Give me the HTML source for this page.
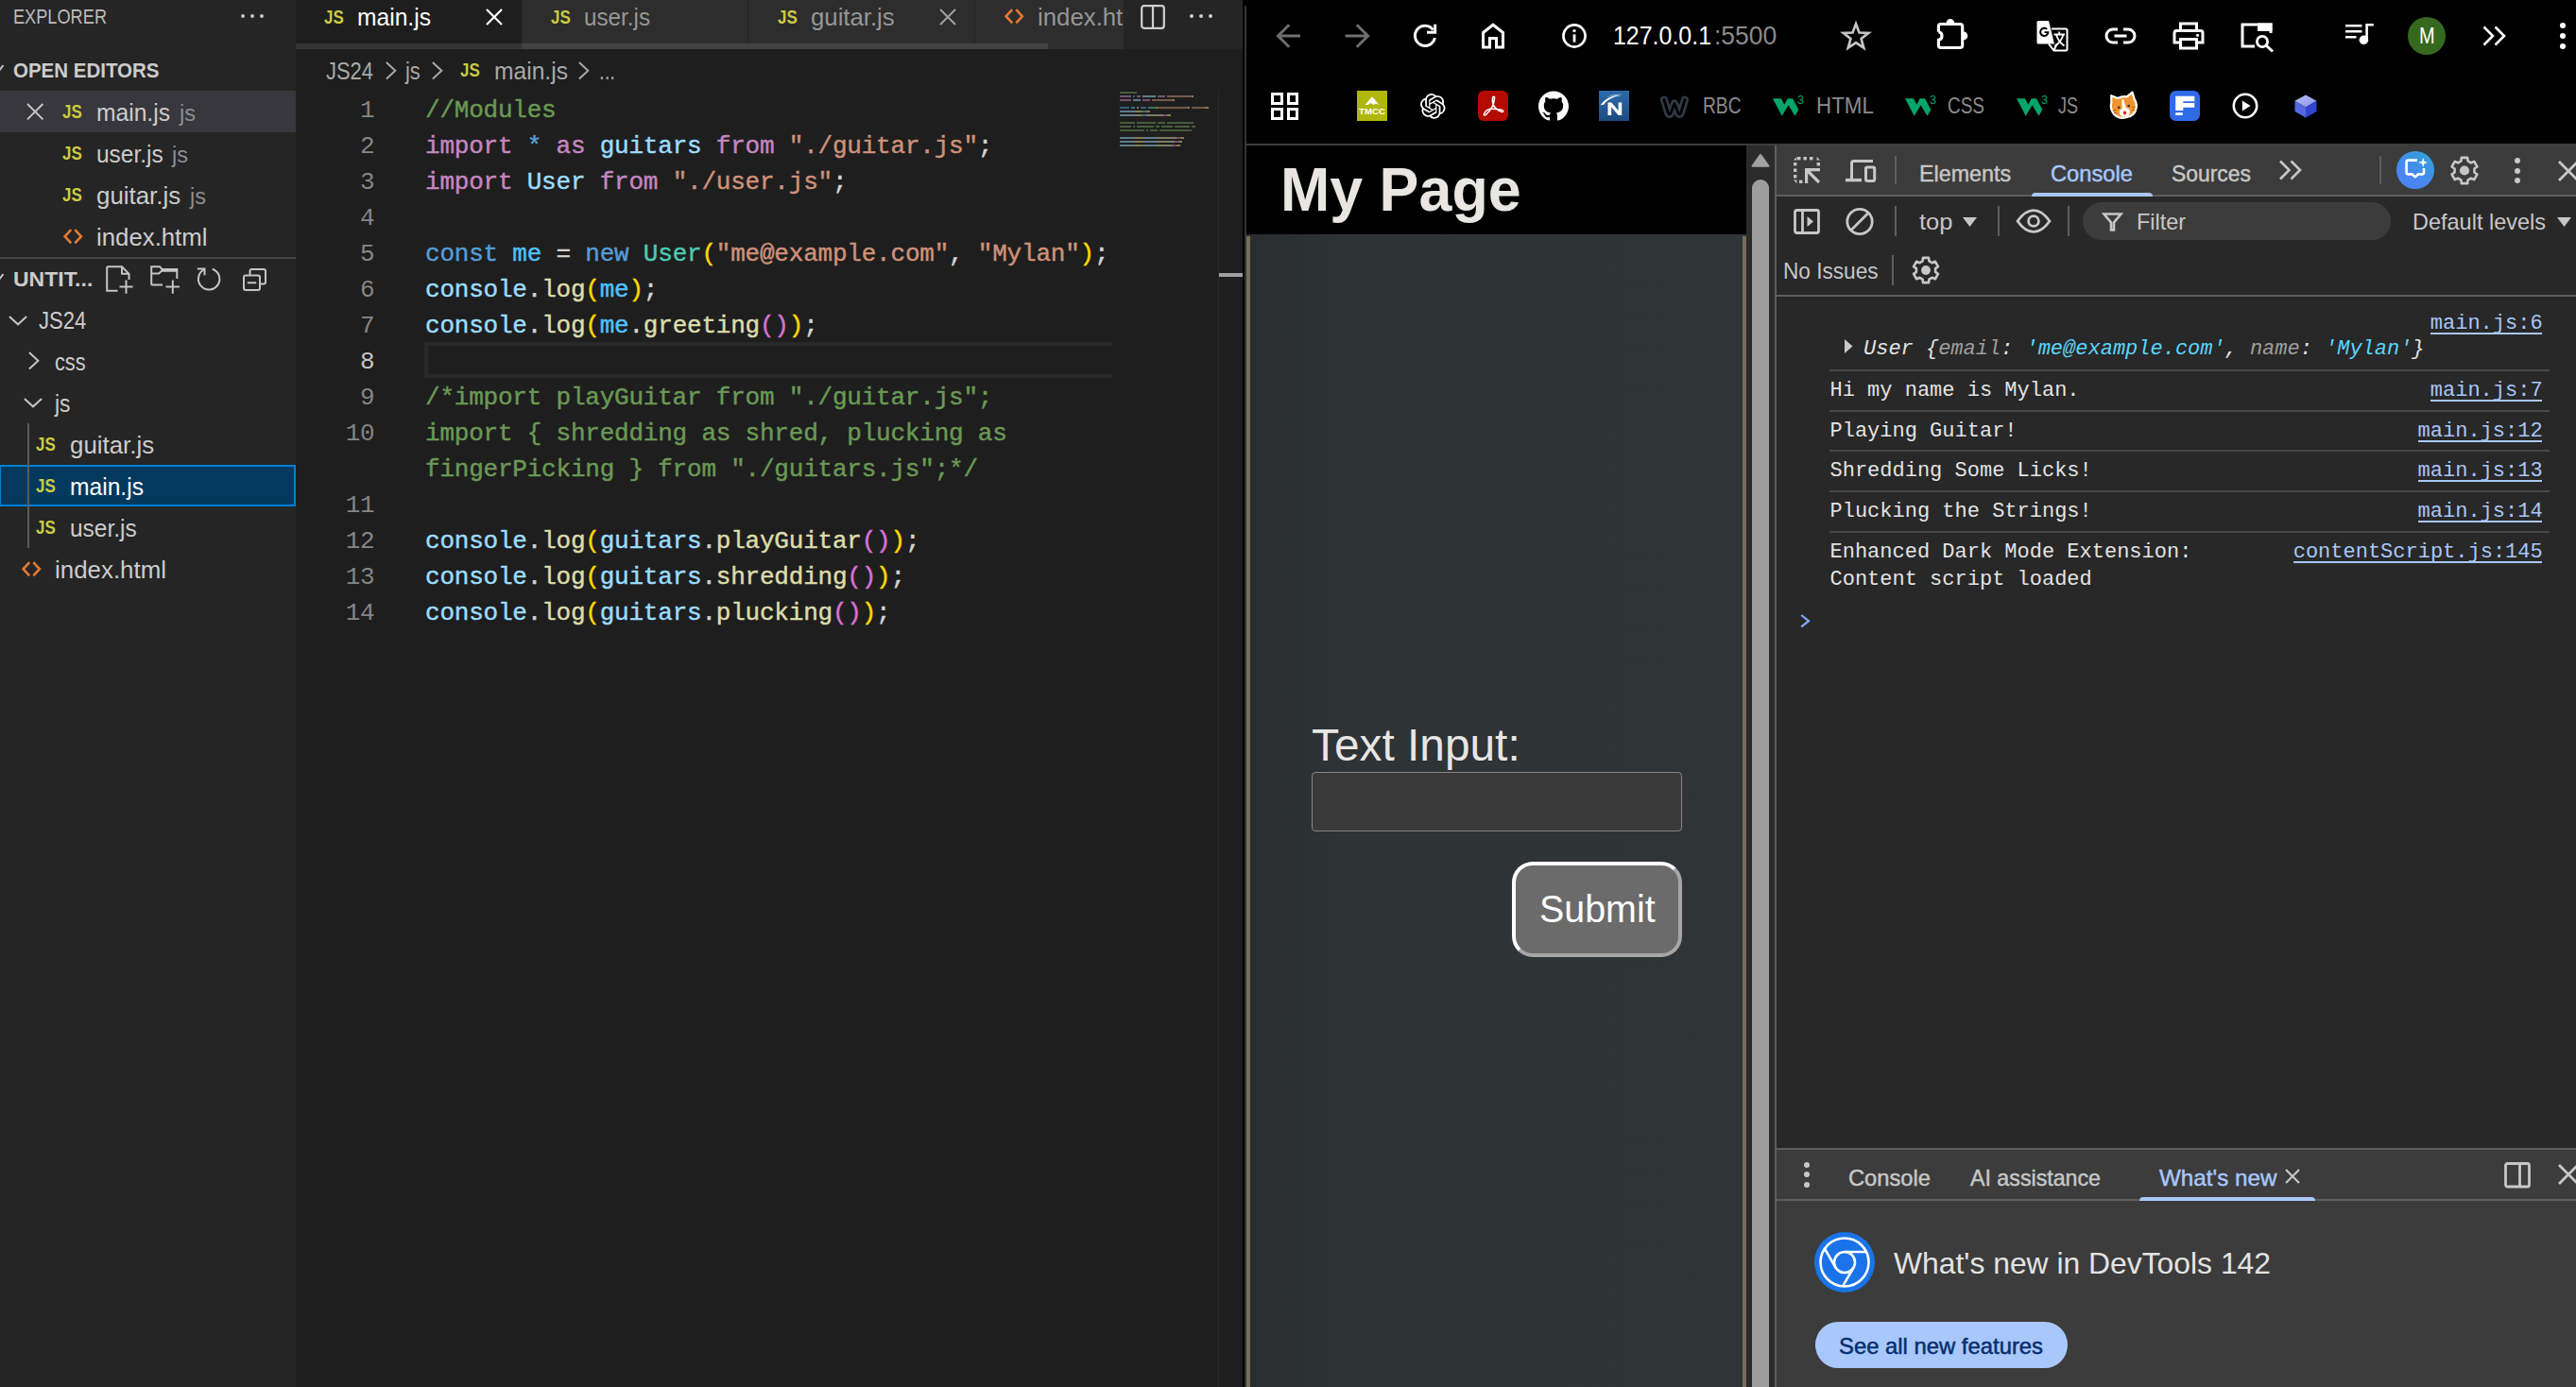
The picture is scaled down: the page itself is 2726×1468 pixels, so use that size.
<!DOCTYPE html>
<html><head><meta charset="utf-8"><title>recreation</title>
<style>
*{box-sizing:border-box;margin:0;padding:0}
html,body{width:2726px;height:1468px;overflow:hidden;background:#000;font-family:"Liberation Sans",sans-serif}
.a{position:absolute;display:block}
.t{position:absolute;display:block;white-space:pre;transform-origin:0 50%;font-family:"Liberation Sans",sans-serif}
.t.m{font-family:"Liberation Mono",monospace}
.b{font-weight:bold}.i{font-style:italic}
svg{overflow:visible}

.ln{position:absolute;left:313px;width:83.5px;text-align:right;font:26px/38px "Liberation Mono",monospace;letter-spacing:-0.213px;height:38px}
.cl{position:absolute;left:450px;white-space:pre;font:26px/38px "Liberation Mono",monospace;letter-spacing:-0.213px;height:38px;-webkit-text-stroke:0.45px}
.mm i{position:absolute;height:2.6px;opacity:.5}
</style></head>
<body>
<div class="a" style="left:0px;top:0px;width:313px;height:1468px;background:#252526;"></div>
<span class="t" style="left:13.80px;top:-3.6px;height:44.0px;line-height:44.0px;font-size:22px;color:#bbbbbb;transform:scaleX(0.8263);">EXPLORER</span>
<div class="a" style="left:254.7px;top:14.7px;width:4.6px;height:4.6px;background:#c5c5c5;border-radius:50%"></div>
<div class="a" style="left:264.7px;top:14.7px;width:4.6px;height:4.6px;background:#c5c5c5;border-radius:50%"></div>
<div class="a" style="left:274.7px;top:14.7px;width:4.6px;height:4.6px;background:#c5c5c5;border-radius:50%"></div>
<svg class="a" style="left:0px;top:68px;" width="4" height="8" viewBox="0 0 4 8"><path d="M-6 1 L-1 7 L3.5 1" fill="none" stroke="#c5c5c5" stroke-width="2"/></svg>
<span class="t b" style="left:13.50px;top:53.4px;height:44.0px;line-height:44.0px;font-size:22px;color:#cccccc;transform:scaleX(0.9315);">OPEN EDITORS</span>
<div class="a" style="left:0px;top:96px;width:313px;height:44px;background:#37373d;"></div>
<svg class="a" style="left:27.8px;top:108.8px;" width="18.4" height="18.4" viewBox="0 0 18.4 18.4"><path d="M1 1 L17.4 17.4 M17.4 1 L1 17.4" fill="none" stroke="#c5c5c5" stroke-width="2"/></svg>
<span class="t b" style="left:66.00px;top:98.1px;height:40.0px;line-height:40.0px;font-size:20px;color:#cbcb41;transform:scaleX(0.8463);">JS</span>
<span class="t" style="left:102.00px;top:93.7px;height:51.0px;line-height:51.0px;font-size:25.5px;color:#cccccc;transform:scaleX(0.9655);">main.js</span>
<span class="t" style="left:189.99px;top:97.0px;height:46.0px;line-height:46.0px;font-size:23px;color:#8e8e8e;transform:scaleX(1.0244);">js</span>
<span class="t b" style="left:66.00px;top:142.1px;height:40.0px;line-height:40.0px;font-size:20px;color:#cbcb41;transform:scaleX(0.8463);">JS</span>
<span class="t" style="left:102.00px;top:137.7px;height:51.0px;line-height:51.0px;font-size:25.5px;color:#cccccc;transform:scaleX(0.9594);">user.js</span>
<span class="t" style="left:182.29px;top:141.0px;height:46.0px;line-height:46.0px;font-size:23px;color:#8e8e8e;transform:scaleX(1.0244);">js</span>
<span class="t b" style="left:66.00px;top:186.1px;height:40.0px;line-height:40.0px;font-size:20px;color:#cbcb41;transform:scaleX(0.8463);">JS</span>
<span class="t" style="left:102.00px;top:181.7px;height:51.0px;line-height:51.0px;font-size:25.5px;color:#cccccc;transform:scaleX(1.0140);">guitar.js</span>
<span class="t" style="left:201.29px;top:185.0px;height:46.0px;line-height:46.0px;font-size:23px;color:#8e8e8e;transform:scaleX(1.0244);">js</span>
<svg class="a" style="left:66.5px;top:241.75px;" width="20.5" height="16.5" viewBox="0 0 20.5 16.5"><path d="M8.2 1.2 L1.6 8.25 L8.2 15.3 M12.3 1.2 L18.9 8.25 L12.3 15.3" fill="none" stroke="#e37933" stroke-width="2.6"/></svg>
<span class="t" style="left:102.00px;top:225.7px;height:51.0px;line-height:51.0px;font-size:25.5px;color:#cccccc;transform:scaleX(1.0109);">index.html</span>
<div class="a" style="left:0px;top:272px;width:313px;height:2px;background:#454546;"></div>
<svg class="a" style="left:0px;top:289px;" width="4" height="8" viewBox="0 0 4 8"><path d="M-6 1 L-1 7 L3.5 1" fill="none" stroke="#c5c5c5" stroke-width="2"/></svg>
<span class="t b" style="left:13.50px;top:274.0px;height:44.0px;line-height:44.0px;font-size:22px;color:#cccccc;transform:scaleX(1.0449);">UNTIT...</span>
<svg class="a" style="left:112px;top:281px;" width="30" height="31" viewBox="0 0 30 31"><path d="M1.2 1.2 H17 L24.5 8.8 V15 M17 1.2 V8.8 H24.5 M1.2 1.2 V26.8 H12.5" fill="none" stroke="#c5c5c5" stroke-width="2"/><path d="M14.5 22.5 H28.5 M21.5 15.5 V29.8" fill="none" stroke="#c5c5c5" stroke-width="2"/></svg>
<svg class="a" style="left:158.5px;top:281px;" width="32" height="31" viewBox="0 0 32 31"><path d="M1.2 20.5 V1.2 H10 L12.5 4 H28.3 V14 M1.2 8.5 H9 L12 5.8 H28.3 M1.2 20.5 H13" fill="none" stroke="#c5c5c5" stroke-width="2"/><path d="M16.5 22.5 H31 M23.8 15.5 V29.8" fill="none" stroke="#c5c5c5" stroke-width="2"/></svg>
<svg class="a" style="left:208px;top:282.5px;overflow:visible;" width="26" height="27" viewBox="0 0 26 27"><path d="M8.3 2.2 A11.2 11.2 0 1 0 16.8 1.7" fill="none" stroke="#c5c5c5" stroke-width="2"/><path d="M0.8 1.5 H8.5 V8.3" fill="none" stroke="#c5c5c5" stroke-width="2"/></svg>
<svg class="a" style="left:256.5px;top:283.5px;" width="26" height="25" viewBox="0 0 26 25"><rect x="1" y="7.5" width="17" height="15.5" rx="2" fill="none" stroke="#c5c5c5" stroke-width="2"/><path d="M7.5 7 V3 Q7.5 1 9.5 1 H22 Q24 1 24 3 V14.5 Q24 16.5 22 16.5 H18.5" fill="none" stroke="#c5c5c5" stroke-width="2"/><path d="M4.8 15.3 H14.2" fill="none" stroke="#c5c5c5" stroke-width="2"/></svg>
<svg class="a" style="left:9.0px;top:333.75px;" width="20.0" height="10.5" viewBox="0 0 20.0 10.5"><path d="M0.9 0.9 L10.0 9.3 L19.1 0.9" fill="none" stroke="#c5c5c5" stroke-width="2"/></svg>
<span class="t" style="left:41.40px;top:313.7px;height:51.0px;line-height:51.0px;font-size:25.5px;color:#cccccc;transform:scaleX(0.8638);">JS24</span>
<svg class="a" style="left:30.049999999999997px;top:372.25px;" width="11.5" height="19.5" viewBox="0 0 11.5 19.5"><path d="M0.9 0.9 L10.3 9.75 L0.9 18.6" fill="none" stroke="#c5c5c5" stroke-width="2"/></svg>
<span class="t" style="left:57.70px;top:357.7px;height:51.0px;line-height:51.0px;font-size:25.5px;color:#cccccc;transform:scaleX(0.8523);">css</span>
<svg class="a" style="left:25.0px;top:421.25px;" width="20.0" height="10.5" viewBox="0 0 20.0 10.5"><path d="M0.9 0.9 L10.0 9.3 L19.1 0.9" fill="none" stroke="#c5c5c5" stroke-width="2"/></svg>
<span class="t" style="left:57.57px;top:401.7px;height:51.0px;line-height:51.0px;font-size:25.5px;color:#cccccc;transform:scaleX(0.8925);">js</span>
<span class="t b" style="left:38.30px;top:450.1px;height:40.0px;line-height:40.0px;font-size:20px;color:#cbcb41;transform:scaleX(0.8463);">JS</span>
<span class="t" style="left:74.00px;top:445.7px;height:51.0px;line-height:51.0px;font-size:25.5px;color:#cccccc;transform:scaleX(1.0140);">guitar.js</span>
<div class="a" style="left:0px;top:492px;width:313px;height:44px;background:#04395e;border:2px solid #007fd4;border-left-width:1px;"></div>
<div class="a" style="left:28.8px;top:448px;width:2px;height:132px;background:#5a5a5a;"></div>
<span class="t b" style="left:38.30px;top:494.1px;height:40.0px;line-height:40.0px;font-size:20px;color:#cbcb41;transform:scaleX(0.8463);">JS</span>
<span class="t" style="left:74.00px;top:489.7px;height:51.0px;line-height:51.0px;font-size:25.5px;color:#ffffff;transform:scaleX(0.9655);">main.js</span>
<span class="t b" style="left:38.30px;top:538.1px;height:40.0px;line-height:40.0px;font-size:20px;color:#cbcb41;transform:scaleX(0.8463);">JS</span>
<span class="t" style="left:74.00px;top:533.7px;height:51.0px;line-height:51.0px;font-size:25.5px;color:#cccccc;transform:scaleX(0.9594);">user.js</span>
<svg class="a" style="left:22.7px;top:593.75px;" width="20.5" height="16.5" viewBox="0 0 20.5 16.5"><path d="M8.2 1.2 L1.6 8.25 L8.2 15.3 M12.3 1.2 L18.9 8.25 L12.3 15.3" fill="none" stroke="#e37933" stroke-width="2.6"/></svg>
<span class="t" style="left:57.70px;top:577.7px;height:51.0px;line-height:51.0px;font-size:25.5px;color:#cccccc;transform:scaleX(1.0152);">index.html</span>
<div class="a" style="left:313px;top:0px;width:1002px;height:1468px;background:#1e1e1e;"></div>
<div class="a" style="left:313px;top:0px;width:1002px;height:52px;background:#252526;"></div>
<div class="a" style="left:313px;top:0px;width:239px;height:52px;background:#1e1e1e;"></div>
<div class="a" style="left:552px;top:0px;width:239px;height:52px;background:#2d2d2d;"></div>
<div class="a" style="left:792px;top:0px;width:239px;height:52px;background:#2d2d2d;"></div>
<div class="a" style="left:1032px;top:0px;width:157px;height:52px;background:#2d2d2d;"></div>
<div class="a" style="left:313px;top:46px;width:239px;height:6px;background:#353535;"></div>
<div class="a" style="left:552px;top:46px;width:557px;height:6px;background:#424242;"></div>
<span class="t b" style="left:342.50px;top:-2.4px;height:40.0px;line-height:40.0px;font-size:20px;color:#cbcb41;transform:scaleX(0.8463);">JS</span>
<span class="t" style="left:378.00px;top:-6.8px;height:51.0px;line-height:51.0px;font-size:25.5px;color:#ffffff;transform:scaleX(0.9655);">main.js</span>
<svg class="a" style="left:514px;top:8.5px;" width="18" height="18" viewBox="0 0 18 18"><path d="M1 1 L17 17 M17 1 L1 17" fill="none" stroke="#ffffff" stroke-width="2.2"/></svg>
<span class="t b" style="left:582.50px;top:-2.4px;height:40.0px;line-height:40.0px;font-size:20px;color:#cbcb41;transform:scaleX(0.8463);">JS</span>
<span class="t" style="left:618.00px;top:-6.8px;height:51.0px;line-height:51.0px;font-size:25.5px;color:#969696;transform:scaleX(0.9499);">user.js</span>
<span class="t b" style="left:822.50px;top:-2.4px;height:40.0px;line-height:40.0px;font-size:20px;color:#cbcb41;transform:scaleX(0.8463);">JS</span>
<span class="t" style="left:858.00px;top:-6.8px;height:51.0px;line-height:51.0px;font-size:25.5px;color:#969696;transform:scaleX(1.0094);">guitar.js</span>
<svg class="a" style="left:994.2px;top:8.5px;" width="18" height="18" viewBox="0 0 18 18"><path d="M1 1 L17 17 M17 1 L1 17" fill="none" stroke="#a0a0a0" stroke-width="2"/></svg>
<svg class="a" style="left:1062.5px;top:9.25px;" width="20.5" height="16.5" viewBox="0 0 20.5 16.5"><path d="M8.2 1.2 L1.6 8.25 L8.2 15.3 M12.3 1.2 L18.9 8.25 L12.3 15.3" fill="none" stroke="#e37933" stroke-width="2.6"/></svg>
<div class="a" style="left:1098px;top:0;width:91px;height:46px;overflow:hidden"><span class="t" style="left:0.00px;top:-6.8px;height:51.0px;line-height:51.0px;font-size:25.5px;color:#969696;transform:scaleX(1.0109);">index.html</span></div>
<svg class="a" style="left:1207px;top:5px;" width="26" height="26" viewBox="0 0 26 26"><rect x="1.2" y="1.2" width="23.6" height="23.6" rx="2.5" fill="none" stroke="#d0d0d0" stroke-width="2.2"/><path d="M13 1 V25" stroke="#d0d0d0" stroke-width="2.2"/></svg>
<div class="a" style="left:1258.7px;top:14.7px;width:4.6px;height:4.6px;background:#d0d0d0;border-radius:50%"></div>
<div class="a" style="left:1268.7px;top:14.7px;width:4.6px;height:4.6px;background:#d0d0d0;border-radius:50%"></div>
<div class="a" style="left:1278.7px;top:14.7px;width:4.6px;height:4.6px;background:#d0d0d0;border-radius:50%"></div>
<span class="t" style="left:345.00px;top:49.7px;height:51.0px;line-height:51.0px;font-size:25.5px;color:#a9a9a9;transform:scaleX(0.8604);">JS24</span>
<svg class="a" style="left:407.75px;top:64.75px;" width="11.5" height="19.5" viewBox="0 0 11.5 19.5"><path d="M0.9 0.9 L10.3 9.75 L0.9 18.6" fill="none" stroke="#a9a9a9" stroke-width="2"/></svg>
<span class="t" style="left:429.05px;top:49.7px;height:51.0px;line-height:51.0px;font-size:25.5px;color:#a9a9a9;transform:scaleX(0.8557);">js</span>
<svg class="a" style="left:456.65px;top:64.75px;" width="11.5" height="19.5" viewBox="0 0 11.5 19.5"><path d="M0.9 0.9 L10.3 9.75 L0.9 18.6" fill="none" stroke="#a9a9a9" stroke-width="2"/></svg>
<span class="t b" style="left:487.00px;top:54.1px;height:40.0px;line-height:40.0px;font-size:20px;color:#cbcb41;transform:scaleX(0.8463);">JS</span>
<span class="t" style="left:522.50px;top:49.7px;height:51.0px;line-height:51.0px;font-size:25.5px;color:#a9a9a9;transform:scaleX(0.9655);">main.js</span>
<svg class="a" style="left:611.65px;top:64.75px;" width="11.5" height="19.5" viewBox="0 0 11.5 19.5"><path d="M0.9 0.9 L10.3 9.75 L0.9 18.6" fill="none" stroke="#a9a9a9" stroke-width="2"/></svg>
<span class="t" style="left:634.00px;top:49.7px;height:51.0px;line-height:51.0px;font-size:25.5px;color:#a9a9a9;transform:scaleX(0.8003);">...</span>
<div class="a" style="left:449px;top:362px;width:728px;height:38px;background:transparent;border:4px solid #282828;border-right:none;"></div>
<div class="ln" style="top:97.6px;color:#858585">1</div>
<div class="cl" style="top:97.7px"><span style="color:#6a9955">//Modules</span></div>
<div class="ln" style="top:135.6px;color:#858585">2</div>
<div class="cl" style="top:135.7px"><span style="color:#c586c0">import</span><span style="color:#d4d4d4"> </span><span style="color:#569cd6">*</span><span style="color:#d4d4d4"> </span><span style="color:#c586c0">as</span><span style="color:#d4d4d4"> </span><span style="color:#9cdcfe">guitars</span><span style="color:#d4d4d4"> </span><span style="color:#c586c0">from</span><span style="color:#d4d4d4"> </span><span style="color:#ce9178">"./guitar.js"</span><span style="color:#d4d4d4">;</span></div>
<div class="ln" style="top:173.6px;color:#858585">3</div>
<div class="cl" style="top:173.7px"><span style="color:#c586c0">import</span><span style="color:#d4d4d4"> </span><span style="color:#9cdcfe">User</span><span style="color:#d4d4d4"> </span><span style="color:#c586c0">from</span><span style="color:#d4d4d4"> </span><span style="color:#ce9178">"./user.js"</span><span style="color:#d4d4d4">;</span></div>
<div class="ln" style="top:211.6px;color:#858585">4</div>
<div class="ln" style="top:249.6px;color:#858585">5</div>
<div class="cl" style="top:249.7px"><span style="color:#569cd6">const</span><span style="color:#d4d4d4"> </span><span style="color:#4fc1ff">me</span><span style="color:#d4d4d4"> = </span><span style="color:#569cd6">new</span><span style="color:#d4d4d4"> </span><span style="color:#4ec9b0">User</span><span style="color:#ffd700">(</span><span style="color:#ce9178">"me@example.com"</span><span style="color:#d4d4d4">, </span><span style="color:#ce9178">"Mylan"</span><span style="color:#ffd700">)</span><span style="color:#d4d4d4">;</span></div>
<div class="ln" style="top:287.6px;color:#858585">6</div>
<div class="cl" style="top:287.7px"><span style="color:#9cdcfe">console</span><span style="color:#d4d4d4">.</span><span style="color:#dcdcaa">log</span><span style="color:#ffd700">(</span><span style="color:#4fc1ff">me</span><span style="color:#ffd700">)</span><span style="color:#d4d4d4">;</span></div>
<div class="ln" style="top:325.6px;color:#858585">7</div>
<div class="cl" style="top:325.7px"><span style="color:#9cdcfe">console</span><span style="color:#d4d4d4">.</span><span style="color:#dcdcaa">log</span><span style="color:#ffd700">(</span><span style="color:#4fc1ff">me</span><span style="color:#d4d4d4">.</span><span style="color:#dcdcaa">greeting</span><span style="color:#da70d6">()</span><span style="color:#ffd700">)</span><span style="color:#d4d4d4">;</span></div>
<div class="ln" style="top:363.6px;color:#c6c6c6">8</div>
<div class="ln" style="top:401.6px;color:#858585">9</div>
<div class="cl" style="top:401.7px"><span style="color:#6a9955">/*import playGuitar from "./guitar.js";</span></div>
<div class="ln" style="top:439.6px;color:#858585">10</div>
<div class="cl" style="top:439.7px"><span style="color:#6a9955">import { shredding as shred, plucking as</span></div>
<div class="cl" style="top:477.7px"><span style="color:#6a9955">fingerPicking } from "./guitars.js";*/</span></div>
<div class="ln" style="top:515.6px;color:#858585">11</div>
<div class="ln" style="top:553.6px;color:#858585">12</div>
<div class="cl" style="top:553.7px"><span style="color:#9cdcfe">console</span><span style="color:#d4d4d4">.</span><span style="color:#dcdcaa">log</span><span style="color:#ffd700">(</span><span style="color:#9cdcfe">guitars</span><span style="color:#d4d4d4">.</span><span style="color:#dcdcaa">playGuitar</span><span style="color:#da70d6">()</span><span style="color:#ffd700">)</span><span style="color:#d4d4d4">;</span></div>
<div class="ln" style="top:591.6px;color:#858585">13</div>
<div class="cl" style="top:591.7px"><span style="color:#9cdcfe">console</span><span style="color:#d4d4d4">.</span><span style="color:#dcdcaa">log</span><span style="color:#ffd700">(</span><span style="color:#9cdcfe">guitars</span><span style="color:#d4d4d4">.</span><span style="color:#dcdcaa">shredding</span><span style="color:#da70d6">()</span><span style="color:#ffd700">)</span><span style="color:#d4d4d4">;</span></div>
<div class="ln" style="top:629.6px;color:#858585">14</div>
<div class="cl" style="top:629.7px"><span style="color:#9cdcfe">console</span><span style="color:#d4d4d4">.</span><span style="color:#dcdcaa">log</span><span style="color:#ffd700">(</span><span style="color:#9cdcfe">guitars</span><span style="color:#d4d4d4">.</span><span style="color:#dcdcaa">plucking</span><span style="color:#da70d6">()</span><span style="color:#ffd700">)</span><span style="color:#d4d4d4">;</span></div>
<div class="a mm" style="left:1185px;top:96px;width:100px;height:64px"><i style="left:0px;top:0.5px;width:18px;background:#6a9955"></i><i style="left:0px;top:4.5px;width:12px;background:#c586c0"></i><i style="left:14px;top:4.5px;width:2px;background:#569cd6"></i><i style="left:18px;top:4.5px;width:4px;background:#c586c0"></i><i style="left:24px;top:4.5px;width:14px;background:#9cdcfe"></i><i style="left:40px;top:4.5px;width:8px;background:#c586c0"></i><i style="left:50px;top:4.5px;width:26px;background:#ce9178"></i><i style="left:76px;top:4.5px;width:2px;background:#d4d4d4"></i><i style="left:0px;top:8.5px;width:12px;background:#c586c0"></i><i style="left:14px;top:8.5px;width:8px;background:#9cdcfe"></i><i style="left:24px;top:8.5px;width:8px;background:#c586c0"></i><i style="left:34px;top:8.5px;width:22px;background:#ce9178"></i><i style="left:56px;top:8.5px;width:2px;background:#d4d4d4"></i><i style="left:0px;top:16.5px;width:10px;background:#569cd6"></i><i style="left:12px;top:16.5px;width:4px;background:#4fc1ff"></i><i style="left:18px;top:16.5px;width:2px;background:#d4d4d4"></i><i style="left:22px;top:16.5px;width:6px;background:#569cd6"></i><i style="left:30px;top:16.5px;width:8px;background:#4ec9b0"></i><i style="left:38px;top:16.5px;width:2px;background:#ffd700"></i><i style="left:40px;top:16.5px;width:32px;background:#ce9178"></i><i style="left:72px;top:16.5px;width:2px;background:#d4d4d4"></i><i style="left:76px;top:16.5px;width:14px;background:#ce9178"></i><i style="left:90px;top:16.5px;width:2px;background:#ffd700"></i><i style="left:92px;top:16.5px;width:2px;background:#d4d4d4"></i><i style="left:0px;top:20.5px;width:14px;background:#9cdcfe"></i><i style="left:14px;top:20.5px;width:2px;background:#d4d4d4"></i><i style="left:16px;top:20.5px;width:6px;background:#dcdcaa"></i><i style="left:22px;top:20.5px;width:2px;background:#ffd700"></i><i style="left:24px;top:20.5px;width:4px;background:#4fc1ff"></i><i style="left:28px;top:20.5px;width:2px;background:#ffd700"></i><i style="left:30px;top:20.5px;width:2px;background:#d4d4d4"></i><i style="left:0px;top:24.5px;width:14px;background:#9cdcfe"></i><i style="left:14px;top:24.5px;width:2px;background:#d4d4d4"></i><i style="left:16px;top:24.5px;width:6px;background:#dcdcaa"></i><i style="left:22px;top:24.5px;width:2px;background:#ffd700"></i><i style="left:24px;top:24.5px;width:4px;background:#4fc1ff"></i><i style="left:28px;top:24.5px;width:2px;background:#d4d4d4"></i><i style="left:30px;top:24.5px;width:16px;background:#dcdcaa"></i><i style="left:46px;top:24.5px;width:4px;background:#da70d6"></i><i style="left:50px;top:24.5px;width:2px;background:#ffd700"></i><i style="left:52px;top:24.5px;width:2px;background:#d4d4d4"></i><i style="left:0px;top:32.5px;width:16px;background:#6a9955"></i><i style="left:18px;top:32.5px;width:20px;background:#6a9955"></i><i style="left:40px;top:32.5px;width:8px;background:#6a9955"></i><i style="left:50px;top:32.5px;width:28px;background:#6a9955"></i><i style="left:0px;top:36.5px;width:12px;background:#6a9955"></i><i style="left:14px;top:36.5px;width:2px;background:#6a9955"></i><i style="left:18px;top:36.5px;width:18px;background:#6a9955"></i><i style="left:38px;top:36.5px;width:4px;background:#6a9955"></i><i style="left:44px;top:36.5px;width:12px;background:#6a9955"></i><i style="left:58px;top:36.5px;width:16px;background:#6a9955"></i><i style="left:76px;top:36.5px;width:4px;background:#6a9955"></i><i style="left:0px;top:40.5px;width:26px;background:#6a9955"></i><i style="left:28px;top:40.5px;width:2px;background:#6a9955"></i><i style="left:32px;top:40.5px;width:8px;background:#6a9955"></i><i style="left:42px;top:40.5px;width:34px;background:#6a9955"></i><i style="left:0px;top:48.5px;width:14px;background:#9cdcfe"></i><i style="left:14px;top:48.5px;width:2px;background:#d4d4d4"></i><i style="left:16px;top:48.5px;width:6px;background:#dcdcaa"></i><i style="left:22px;top:48.5px;width:2px;background:#ffd700"></i><i style="left:24px;top:48.5px;width:14px;background:#9cdcfe"></i><i style="left:38px;top:48.5px;width:2px;background:#d4d4d4"></i><i style="left:40px;top:48.5px;width:20px;background:#dcdcaa"></i><i style="left:60px;top:48.5px;width:4px;background:#da70d6"></i><i style="left:64px;top:48.5px;width:2px;background:#ffd700"></i><i style="left:66px;top:48.5px;width:2px;background:#d4d4d4"></i><i style="left:0px;top:52.5px;width:14px;background:#9cdcfe"></i><i style="left:14px;top:52.5px;width:2px;background:#d4d4d4"></i><i style="left:16px;top:52.5px;width:6px;background:#dcdcaa"></i><i style="left:22px;top:52.5px;width:2px;background:#ffd700"></i><i style="left:24px;top:52.5px;width:14px;background:#9cdcfe"></i><i style="left:38px;top:52.5px;width:2px;background:#d4d4d4"></i><i style="left:40px;top:52.5px;width:18px;background:#dcdcaa"></i><i style="left:58px;top:52.5px;width:4px;background:#da70d6"></i><i style="left:62px;top:52.5px;width:2px;background:#ffd700"></i><i style="left:64px;top:52.5px;width:2px;background:#d4d4d4"></i><i style="left:0px;top:56.5px;width:14px;background:#9cdcfe"></i><i style="left:14px;top:56.5px;width:2px;background:#d4d4d4"></i><i style="left:16px;top:56.5px;width:6px;background:#dcdcaa"></i><i style="left:22px;top:56.5px;width:2px;background:#ffd700"></i><i style="left:24px;top:56.5px;width:14px;background:#9cdcfe"></i><i style="left:38px;top:56.5px;width:2px;background:#d4d4d4"></i><i style="left:40px;top:56.5px;width:16px;background:#dcdcaa"></i><i style="left:56px;top:56.5px;width:4px;background:#da70d6"></i><i style="left:60px;top:56.5px;width:2px;background:#ffd700"></i><i style="left:62px;top:56.5px;width:2px;background:#d4d4d4"></i></div>
<div class="a" style="left:1289px;top:96px;width:26px;height:1372px;background:#1e1e1e;border-left:1px solid #2a2a2a;"></div>
<div class="a" style="left:1290px;top:289px;width:25px;height:4px;background:#a0a0a0;"></div>
<div class="a" style="left:0;top:0;width:2726px;height:1468px;overflow:hidden"><div class="a" style="left:1315px;top:0px;width:1411px;height:152px;background:#000;"></div>
<div class="a" style="left:1317px;top:6px;width:2px;height:1462px;background:#343434;"></div>
<svg class="a" style="left:1349px;top:24px;" width="30" height="28" viewBox="0 0 30 28"><path d="M27 14 H4 M15.2 2.2 L3.4 14 L15.2 25.8" fill="none" stroke="#6e6e6e" stroke-width="3"/></svg>
<svg class="a" style="left:1421px;top:24px;" width="30" height="28" viewBox="0 0 30 28"><path d="M2.5 14 H26 M14.8 2.2 L26.6 14 L14.8 25.8" fill="none" stroke="#6e6e6e" stroke-width="3"/></svg>
<svg class="a" style="left:1494px;top:24px;" width="28" height="28" viewBox="0 0 28 28"><path d="M22.6 7.6 A10.6 10.6 0 1 0 24.4 16" fill="none" stroke="#ffffff" stroke-width="3"/><path d="M24.7 1.8 V10.3 H16" fill="none" stroke="#ffffff" stroke-width="3"/></svg>
<svg class="a" style="left:1566px;top:23px;" width="28" height="30" viewBox="0 0 28 30"><path d="M3.5 27 V11.5 L14 3.2 L24.5 11.5 V27 H17.5 V17.5 H10.5 V27 Z" fill="none" stroke="#ffffff" stroke-width="3" stroke-linejoin="miter"/></svg>
<svg class="a" style="left:1652px;top:24px;" width="28" height="28" viewBox="0 0 28 28"><circle cx="14" cy="14" r="11.6" fill="none" stroke="#ffffff" stroke-width="2.6"/><rect x="12.6" y="12.4" width="2.8" height="8.2" fill="#ffffff"/><circle cx="14" cy="8.6" r="1.7" fill="#ffffff"/></svg>
<span class="t" style="left:1706.80px;top:9.4px;height:57.0px;line-height:57.0px;font-size:28.5px;color:#ffffff;transform:scaleX(0.8751);">127.0.0.1</span>
<span class="t" style="left:1814.40px;top:9.4px;height:57.0px;line-height:57.0px;font-size:28.5px;color:#8a8a8a;transform:scaleX(0.9284);">:5500</span>
<svg class="a" style="left:1947px;top:20.5px;" width="34" height="34" viewBox="0 0 34 34"><polygon points="17.00,4.25 20.47,13.48 30.31,13.92 22.61,20.07 25.23,29.58 17.00,24.15 8.77,29.58 11.39,20.07 3.69,13.92 13.53,13.48" fill="none" stroke="#c4c4c4" stroke-width="2.7" stroke-linejoin="miter"/></svg>
<svg class="a" style="left:2048px;top:18px;" width="36" height="36" viewBox="0 0 36 36"><path d="M3.4 15.8 V10 Q3.4 7.5 5.9 7.5 H26.2 Q28.7 7.5 28.7 10 V30 Q28.7 32.5 26.2 32.5 H5.9 Q3.4 32.5 3.4 30 V24.3 A4.3 4.3 0 0 0 3.4 15.8" fill="none" stroke="#ffffff" stroke-width="3.1"/><path d="M11.6 6.4 A4.3 4.3 0 0 1 20.2 6.4 Z M30 15.6 A4.3 4.3 0 0 1 30 24.2 Z" fill="#ffffff"/></svg>
<svg class="a" style="left:2154px;top:20px;" width="36" height="36" viewBox="0 0 36 36"><path d="M3 2 H14 L20 26.5 H3 Q1.5 26.5 1.5 25 V3.5 Q1.5 2 3 2 Z" fill="#ffffff"/><path d="M17 10.5 H32 Q33.5 10.5 33.5 12 V32 Q33.5 33.5 32 33.5 H19.5 L14 26.5" fill="none" stroke="#ffffff" stroke-width="2"/><path d="M19.5 33.5 L22.5 26.5" stroke="#ffffff" stroke-width="2"/><path d="M19.5 16.5 H31 M25.2 13.5 V16.5 M22 16.5 Q24 24 30.5 28.5 M29.5 16.5 Q27.5 24 20.5 29" fill="none" stroke="#ffffff" stroke-width="1.8"/><path d="M14.3 13.2 H9.6 V15 H12.2 A3.1 3.1 0 1 1 11.4 11.6 L12.8 10.2 A5.1 5.1 0 1 0 14.4 14 Z" fill="#000"/></svg>
<svg class="a" style="left:2227px;top:29px;" width="34" height="18" viewBox="0 0 34 18"><path d="M14 2 H9 A7 7 0 0 0 9 16 H14 M20 2 H25 A7 7 0 0 1 25 16 H20 M10.5 9 H23.5" fill="none" stroke="#ffffff" stroke-width="3"/></svg>
<svg class="a" style="left:2298px;top:23px;" width="36" height="30" viewBox="0 0 36 30"><path d="M9.5 9 V2 H26.5 V9" fill="none" stroke="#ffffff" stroke-width="3"/><path d="M8.5 22 H3 V12 Q3 9.5 5.5 9.5 H30.5 Q33 9.5 33 12 V22 H27.5" fill="none" stroke="#ffffff" stroke-width="3"/><rect x="9.5" y="18.5" width="17" height="9.5" fill="none" stroke="#ffffff" stroke-width="3"/><circle cx="27.5" cy="14.3" r="1.6" fill="#ffffff"/></svg>
<svg class="a" style="left:2370px;top:23px;" width="38" height="32" viewBox="0 0 38 32"><path d="M16 26 H3 V3 H33 V12" fill="none" stroke="#ffffff" stroke-width="3"/><rect x="19" y="1.5" width="15.5" height="8.5" fill="#ffffff"/><circle cx="24" cy="21" r="5.6" fill="none" stroke="#ffffff" stroke-width="2.8"/><path d="M28 25 L35 31.5" stroke="#ffffff" stroke-width="3"/></svg>
<svg class="a" style="left:2481px;top:24px;" width="32" height="26" viewBox="0 0 32 26"><path d="M1 3.2 H18.5 M1 9.2 H18.5 M1 15.2 H12.5" stroke="#ffffff" stroke-width="2.6"/><path d="M23.6 18 V2.2 H30.8" fill="none" stroke="#ffffff" stroke-width="2.6"/><circle cx="20.4" cy="18.3" r="4.8" fill="#ffffff"/></svg>
<div class="a" style="left:2548px;top:18px;width:40px;height:40px;background:#35691f;border-radius:50%"></div>
<span class="t" style="left:2559.70px;top:14.2px;height:48.0px;line-height:48.0px;font-size:24px;color:#ffffff;transform:scaleX(0.8303);">M</span>
<svg class="a" style="left:2626px;top:27px;" width="28" height="22" viewBox="0 0 28 22"><path d="M2.5 1.5 L12 11 L2.5 20.5 M14.5 1.5 L24 11 L14.5 20.5" fill="none" stroke="#ffffff" stroke-width="2.6"/></svg>
<div class="a" style="left:2709px;top:24px;width:6px;height:6px;background:#ffffff;border-radius:50%"></div>
<div class="a" style="left:2709px;top:35px;width:6px;height:6px;background:#ffffff;border-radius:50%"></div>
<div class="a" style="left:2709px;top:46px;width:6px;height:6px;background:#ffffff;border-radius:50%"></div>
<div class="a" style="left:1345px;top:98px;width:12.5px;height:12.5px;background:transparent;border:3px solid #fff;"></div>
<div class="a" style="left:1361.5px;top:98px;width:12.5px;height:12.5px;background:transparent;border:3px solid #fff;"></div>
<div class="a" style="left:1345px;top:114px;width:12.5px;height:12.5px;background:transparent;border:3px solid #fff;"></div>
<div class="a" style="left:1361.5px;top:114px;width:12.5px;height:12.5px;background:transparent;border:3px solid #fff;"></div>
<div class="a" style="left:1436px;top:96px;width:32px;height:32px;background:#b0b70a;"></div>
<svg class="a" style="left:1436px;top:96px;" width="32" height="32" viewBox="0 0 32 32"><path d="M8.5 15 L16 6.2 L23.5 15 L20 13.6 L17.6 15 L14.6 13 L11.5 15 Z" fill="#fff"/><text x="16" y="25" text-anchor="middle" font-family="Liberation Sans" font-weight="bold" font-size="8.6" fill="#fff" textLength="28" lengthAdjust="spacingAndGlyphs">TMCC</text></svg>
<svg class="a" style="left:1502.8px;top:98.6px;" width="26.6" height="26.8" viewBox="0 0 24 24"><path fill="#fff" d="M22.2819 9.8211a5.9847 5.9847 0 0 0-.5157-4.9108 6.0462 6.0462 0 0 0-6.5098-2.9A6.0651 6.0651 0 0 0 4.9807 4.1818a5.9847 5.9847 0 0 0-3.9977 2.9 6.0462 6.0462 0 0 0 .7427 7.0966 5.98 5.98 0 0 0 .511 4.9107 6.051 6.051 0 0 0 6.5146 2.9001A5.9847 5.9847 0 0 0 13.2599 24a6.0557 6.0557 0 0 0 5.7718-4.2058 5.9894 5.9894 0 0 0 3.9977-2.9001 6.0557 6.0557 0 0 0-.7475-7.0729zm-9.022 12.6081a4.4755 4.4755 0 0 1-2.8764-1.0408l.1419-.0804 4.7783-2.7582a.7948.7948 0 0 0 .3927-.6813v-6.7369l2.02 1.1686a.071.071 0 0 1 .038.052v5.5826a4.504 4.504 0 0 1-4.4945 4.4944zm-9.6607-4.1254a4.4708 4.4708 0 0 1-.5346-3.0137l.142.0852 4.783 2.7582a.7712.7712 0 0 0 .7806 0l5.8428-3.3685v2.3324a.0804.0804 0 0 1-.0332.0615L9.74 19.9502a4.4992 4.4992 0 0 1-6.1408-1.6464zM2.3408 7.8956a4.485 4.485 0 0 1 2.3655-1.9728V11.6a.7664.7664 0 0 0 .3879.6765l5.8144 3.3543-2.0201 1.1685a.0757.0757 0 0 1-.071 0l-4.8303-2.7865A4.504 4.504 0 0 1 2.3408 7.872zm16.5963 3.8558L13.1038 8.364 15.1192 7.2a.0757.0757 0 0 1 .071 0l4.8303 2.7913a4.4944 4.4944 0 0 1-.6765 8.1042v-5.6772a.79.79 0 0 0-.407-.667zm2.0107-3.0231l-.142-.0852-4.7735-2.7818a.7759.7759 0 0 0-.7854 0L9.409 9.2297V6.8974a.0662.0662 0 0 1 .0284-.0615l4.8303-2.7866a4.4992 4.4992 0 0 1 6.6802 4.66zM8.3065 12.863l-2.02-1.1638a.0804.0804 0 0 1-.038-.0567V6.0742a4.4992 4.4992 0 0 1 7.3757-3.4537l-.142.0805L8.704 5.459a.7948.7948 0 0 0-.3927.6813zm1.0976-2.3654l2.602-1.4998 2.6069 1.4998v2.9994l-2.5974 1.4997-2.6067-1.4997Z"/></svg>
<div class="a" style="left:1564px;top:96px;width:32px;height:32px;background:#b30b00;border-radius:6px"></div>
<svg class="a" style="left:1564px;top:96px;" width="32" height="32" viewBox="0 0 32 32"><path d="M6.5 24.5 C9 19 13.5 18 25.8 20.6 C27.5 21.2 26.8 23 24.8 22.4 C18 19.5 14.5 14 15.6 7.6 C16 5.6 17.8 6 17.6 8 C17 14.5 13 21.5 8.4 25.4 C7 26.4 5.8 25.8 6.5 24.5 Z" fill="none" stroke="#fff" stroke-width="1.5" stroke-linejoin="round"/></svg>
<svg class="a" style="left:1628px;top:96px;" width="32" height="32" viewBox="0 0 24 24"><path fill="#fff" d="M12 .297c-6.63 0-12 5.373-12 12 0 5.303 3.438 9.8 8.205 11.385.6.113.82-.258.82-.577 0-.285-.01-1.04-.015-2.04-3.338.724-4.042-1.61-4.042-1.61C4.422 18.07 3.633 17.7 3.633 17.7c-1.087-.744.084-.729.084-.729 1.205.084 1.838 1.236 1.838 1.236 1.07 1.835 2.809 1.305 3.495.998.108-.776.417-1.305.76-1.605-2.665-.3-5.466-1.332-5.466-5.93 0-1.31.465-2.38 1.235-3.22-.135-.303-.54-1.523.105-3.176 0 0 1.005-.322 3.3 1.23.96-.267 1.98-.399 3-.405 1.02.006 2.04.138 3 .405 2.28-1.552 3.285-1.23 3.285-1.23.645 1.653.24 2.873.12 3.176.765.84 1.23 1.91 1.23 3.22 0 4.61-2.805 5.625-5.475 5.92.42.36.81 1.096.81 2.22 0 1.606-.015 2.896-.015 3.286 0 .315.21.69.825.57C20.565 22.092 24 17.592 24 12.297c0-6.627-5.373-12-12-12"/></svg>
<div class="a" style="left:1692px;top:96px;width:32px;height:32px;background:linear-gradient(#2b6cab,#1d4b80);"></div>
<svg class="a" style="left:1692px;top:96px;" width="32" height="32" viewBox="0 0 32 32"><path d="M9.5 26 V12.5 H13.4 L20.6 21 V12.5 H24.2 V26 H20.6 L13.2 17.2 V26 Z" fill="#fff"/><path d="M1.5 15.5 C7 7.5 15 4.5 23 5 C14 6.5 8.5 10 5.5 14.5 Z" fill="#fff"/><path d="M8 7.5 C13 4 19 3.4 25 4 C18 4.4 13 5.4 8 7.5 Z" fill="#bcd3ea"/></svg>
<svg class="a" style="left:1756px;top:100px;" width="32" height="26" viewBox="0 0 32 26"><path d="M5 5.5 L9.2 19.5 Q10.5 22.5 12.2 19.5 L16 9.5 L19.8 19.5 Q21.5 22.5 22.8 19.5 L27 5.5" fill="none" stroke="#313a45" stroke-width="8" stroke-linecap="round" stroke-linejoin="round"/><path d="M5 5.5 L9.2 19.5 Q10.5 22.5 12.2 19.5 L16 9.5 L19.8 19.5 Q21.5 22.5 22.8 19.5 L27 5.5" fill="none" stroke="#000" stroke-width="2.8" stroke-linecap="round" stroke-linejoin="round"/></svg>
<span class="t" style="left:1801.50px;top:87.5px;height:48.0px;line-height:48.0px;font-size:24px;color:#8b8b8b;transform:scaleX(0.7994);">RBC</span>
<svg class="a" style="left:1876px;top:100px;" width="34" height="24" viewBox="0 0 34 24"><path d="M0 4.15 H8.78 L12.36 10.74 L15.68 4.15 H21 L27.3 16.07 L23.5 22.66 L16.6 11.37 L9.7 22.66 Z" fill="#04a56a"/><text x="26" y="10.4" font-family="Liberation Sans" font-size="12.6" fill="#04a56a">3</text></svg>
<span class="t" style="left:1921.50px;top:87.5px;height:48.0px;line-height:48.0px;font-size:24px;color:#8b8b8b;transform:scaleX(0.9307);">HTML</span>
<svg class="a" style="left:2016px;top:100px;" width="34" height="24" viewBox="0 0 34 24"><path d="M0 4.15 H8.78 L12.36 10.74 L15.68 4.15 H21 L27.3 16.07 L23.5 22.66 L16.6 11.37 L9.7 22.66 Z" fill="#04a56a"/><text x="26" y="10.4" font-family="Liberation Sans" font-size="12.6" fill="#04a56a">3</text></svg>
<span class="t" style="left:2060.50px;top:87.5px;height:48.0px;line-height:48.0px;font-size:24px;color:#8b8b8b;transform:scaleX(0.7904);">CSS</span>
<svg class="a" style="left:2134px;top:100px;" width="34" height="24" viewBox="0 0 34 24"><path d="M0 4.15 H8.78 L12.36 10.74 L15.68 4.15 H21 L27.3 16.07 L23.5 22.66 L16.6 11.37 L9.7 22.66 Z" fill="#04a56a"/><text x="26" y="10.4" font-family="Liberation Sans" font-size="12.6" fill="#04a56a">3</text></svg>
<span class="t" style="left:2178.00px;top:87.5px;height:48.0px;line-height:48.0px;font-size:24px;color:#8b8b8b;transform:scaleX(0.7498);">JS</span>
<svg class="a" style="left:2231px;top:95.5px;" width="34" height="32" viewBox="0 0 34 32"><g transform="rotate(-9 17 17)"><path d="M4.2 10.5 L5.2 3.2 L11.6 7 Q16.5 5.4 21.4 7 L27.8 3.2 L28.8 10.5 Q31 15.5 29.4 20 Q26.6 28.6 16.5 28.6 Q6.4 28.6 3.6 20 Q2 15.5 4.2 10.5 Z" fill="#ef9430" stroke="#fff" stroke-width="2.2" stroke-linejoin="round"/><path d="M15.6 9 L17.4 9 L18.6 18.5 Q22.8 19.5 22 23.5 Q21 27.4 16.5 27.4 Q12 27.4 11 23.5 Q10.2 19.5 14.4 18.5 Z" fill="#fff"/><circle cx="11.2" cy="16.8" r="1.3" fill="#3a2a1a"/><circle cx="21.8" cy="16.8" r="1.3" fill="#3a2a1a"/><ellipse cx="16.5" cy="23.4" rx="1.7" ry="2" fill="#d22"/><path d="M4.6 19 H8 M5.2 22 H8.4 M28.4 19 H25 M27.8 22 H24.6" stroke="#b5630e" stroke-width="1.1"/></g></svg>
<div class="a" style="left:2296px;top:96px;width:32px;height:32px;background:#2f6be6;border-radius:6.5px"></div>
<svg class="a" style="left:2296px;top:96px;" width="32" height="32" viewBox="0 0 32 32"><path d="M6.2 5.8 H26.3 V11.3 H14.3 V13 H26.3 V17.8 H14.3 V21 H6.2 Z" fill="#fff"/><rect x="6.2" y="23.2" width="7.6" height="2.8" fill="#fff"/></svg>
<svg class="a" style="left:2361px;top:97px;" width="30" height="30" viewBox="0 0 30 30"><circle cx="15" cy="15" r="12.2" fill="none" stroke="#fff" stroke-width="2.6"/><path d="M11.8 9.6 L20.6 15 L11.8 20.4 Z" fill="#fff"/></svg>
<svg class="a" style="left:2428px;top:99.5px;" width="24" height="25" viewBox="0 0 24 25"><defs><linearGradient id="cg" x1="0" y1="0" x2="1" y2="1"><stop offset="0" stop-color="#b7bef6"/><stop offset="1" stop-color="#8a93ea"/></linearGradient></defs><path d="M12 0.5 L23.5 6.8 L12 13.4 L0.5 6.8 Z" fill="url(#cg)"/><path d="M0.5 6.8 L12 13.4 V24.5 L0.5 18 Z" fill="#5568e0"/><path d="M23.5 6.8 L12 13.4 V24.5 L23.5 18 Z" fill="#3145cf"/></svg>
<div class="a" style="left:1319px;top:152px;width:1407px;height:2px;background:#3c3c3c;"></div>
<div class="a" style="left:1319px;top:154px;width:529px;height:94px;background:#000;"></div>
<span class="t b" style="left:1355.00px;top:136.8px;height:128.0px;line-height:128.0px;font-size:64px;color:#e8e6e3;transform:scaleX(0.9806);">My Page</span>
<div class="a" style="left:1319px;top:248px;width:529px;height:1220px;background:linear-gradient(90deg,#292d30 0,#2e3336 100px,#2f3437 100%);"></div>
<div class="a" style="left:1319px;top:250px;width:4.2px;height:1218px;background:#776d5d;"></div>
<div class="a" style="left:1843.6px;top:250px;width:4.2px;height:1218px;background:#776d5d;"></div>
<span class="t" style="left:1388.00px;top:741.4px;height:96.0px;line-height:96.0px;font-size:48px;color:#e8e6e3;transform:scaleX(0.9965);">Text Input:</span>
<div class="a" style="left:1388px;top:817px;width:392px;height:63px;background:#3a3a3a;border:1.5px solid #858585;border-radius:4px;"></div>
<div class="a" style="left:1600px;top:912px;width:180px;height:101px;background:#6b6b6b;border:4.5px solid;border-color:#fff #a6a6a6 #a6a6a6 #fff;border-radius:22px;"></div>
<span class="t" style="left:1628.80px;top:921.6px;height:80.0px;line-height:80.0px;font-size:40px;color:#ffffff;transform:scaleX(0.9849);">Submit</span>
<div class="a" style="left:1848px;top:154px;width:30px;height:1314px;background:#2b2b2b;"></div>
<svg class="a" style="left:1852px;top:161px;" width="22" height="18" viewBox="0 0 22 18"><path d="M11 3.2 L19.2 14.6 H2.8 Z" fill="#a2a2a2" stroke="#a2a2a2" stroke-width="2.4" stroke-linejoin="round"/></svg>
<div class="a" style="left:1854px;top:190px;width:18px;height:1300px;background:#9e9e9e;border-radius:9px"></div></div>
<div class="a" style="left:1878px;top:154px;width:2px;height:1314px;background:#5e5e5e;"></div>
<div class="a" style="left:1880px;top:154px;width:846px;height:52px;background:#3c3c3c;"></div>
<div class="a" style="left:1880px;top:206px;width:846px;height:2px;background:#5e5e5e;"></div>
<div class="a" style="left:1880px;top:208px;width:846px;height:1007px;background:#282828;"></div>
<svg class="a" style="left:1898px;top:166px;" width="28" height="28" viewBox="0 0 28 28"><rect x="4" y="0" width="3.4" height="3.4" fill="#c7c7c7"/><rect x="10.5" y="0" width="3.4" height="3.4" fill="#c7c7c7"/><rect x="17" y="0" width="3.4" height="3.4" fill="#c7c7c7"/><rect x="0" y="6" width="3.4" height="3.4" fill="#c7c7c7"/><rect x="24.6" y="6" width="3.4" height="3.4" fill="#c7c7c7"/><rect x="0" y="12.5" width="3.4" height="3.4" fill="#c7c7c7"/><rect x="0" y="19" width="3.4" height="3.4" fill="#c7c7c7"/><rect x="6" y="24.6" width="3.4" height="3.4" fill="#c7c7c7"/><path d="M0 3.4 L3.4 0 V3.4 Z M24.6 0 L28 3.4 H24.6 Z M0 24.6 H3.4 V28 Z" fill="#c7c7c7"/><path d="M13.6 28 V13.6 H28 M14.5 14.5 L27 27" fill="none" stroke="#c7c7c7" stroke-width="3.2"/></svg>
<svg class="a" style="left:1952.5px;top:168.5px;" width="32" height="24" viewBox="0 0 32 24"><path d="M6.5 20 V3.5 Q6.5 1.6 8.4 1.6 H29" fill="none" stroke="#c7c7c7" stroke-width="3"/><path d="M0 21.6 H17" stroke="#c7c7c7" stroke-width="3.4"/><rect x="21.5" y="8" width="9.2" height="14.4" rx="1.5" fill="none" stroke="#c7c7c7" stroke-width="3"/></svg>
<div class="a" style="left:2004.5px;top:165px;width:2px;height:30px;background:#5e5e5e;"></div>
<span class="t" style="left:2031.00px;top:159.7px;height:48.0px;line-height:48.0px;font-size:24px;color:#c7c7c7;transform:scaleX(0.9697);-webkit-text-stroke:0.45px;">Elements</span>
<span class="t" style="left:2170.00px;top:159.7px;height:48.0px;line-height:48.0px;font-size:24px;color:#a8c7fa;transform:scaleX(0.9880);-webkit-text-stroke:0.45px;">Console</span>
<div class="a" style="left:2150px;top:204px;width:128px;height:4px;background:#a8c7fa;border-radius:4px 4px 0 0"></div>
<span class="t" style="left:2298.00px;top:159.7px;height:48.0px;line-height:48.0px;font-size:24px;color:#c7c7c7;transform:scaleX(0.9542);-webkit-text-stroke:0.45px;">Sources</span>
<svg class="a" style="left:2411px;top:168.5px;" width="26" height="22" viewBox="0 0 26 22"><path d="M2 1.5 L11.5 11 L2 20.5 M13.5 1.5 L23 11 L13.5 20.5" fill="none" stroke="#c7c7c7" stroke-width="2.6"/></svg>
<div class="a" style="left:2518px;top:165px;width:2px;height:30px;background:#5e5e5e;"></div>
<div class="a" style="left:2536px;top:159.8px;width:40px;height:40px;background:linear-gradient(35deg,#4a86f3 35%,#2fa4d4);border-radius:50%"></div>
<svg class="a" style="left:2544px;top:167px;" width="26" height="26" viewBox="0 0 26 26"><path d="M14 2.6 H4.6 Q2.6 2.6 2.6 4.6 V15.4 Q2.6 17.4 4.6 17.4 H8.6 L11.8 20.4 L15 17.4 H19 Q21 17.4 21 15.4 V11" fill="none" stroke="#fff" stroke-width="2.6" stroke-linejoin="round"/><path d="M20.2 0 L21.5 3.7 L25.2 5 L21.5 6.3 L20.2 10 L18.9 6.3 L15.2 5 L18.9 3.7 Z" fill="#fff"/></svg>
<svg class="a" style="left:0;top:0" width="2726" height="1468"><polygon points="2604.45,170.47 2604.81,166.87 2611.19,166.87 2611.55,170.47 2614.91,172.41 2618.21,170.92 2621.40,176.45 2618.46,178.56 2618.46,182.44 2621.40,184.55 2618.21,190.08 2614.91,188.59 2611.55,190.53 2611.19,194.13 2604.81,194.13 2604.45,190.53 2601.09,188.59 2597.79,190.08 2594.60,184.55 2597.54,182.44 2597.54,178.56 2594.60,176.45 2597.79,170.92 2601.09,172.41" fill="none" stroke="#c7c7c7" stroke-width="2.6" stroke-linejoin="round"/><circle cx="2608" cy="180.5" r="5.10" fill="#c7c7c7"/></svg>
<div class="a" style="left:2660.5px;top:167px;width:6px;height:6px;background:#c7c7c7;border-radius:50%"></div>
<div class="a" style="left:2660.5px;top:177.5px;width:6px;height:6px;background:#c7c7c7;border-radius:50%"></div>
<div class="a" style="left:2660.5px;top:188px;width:6px;height:6px;background:#c7c7c7;border-radius:50%"></div>
<svg class="a" style="left:2707px;top:170px;" width="22" height="22" viewBox="0 0 22 22"><path d="M1 1 L21 21 M21 1 L1 21" stroke="#c7c7c7" stroke-width="2.8"/></svg>
<svg class="a" style="left:1898px;top:220.5px;" width="28" height="27" viewBox="0 0 28 27"><rect x="1.5" y="1.5" width="25" height="24" rx="2" fill="none" stroke="#c7c7c7" stroke-width="2.8"/><path d="M9.5 1.5 V25.5" stroke="#c7c7c7" stroke-width="2.8"/><path d="M14.5 8 L21 13.5 L14.5 19 Z" fill="#c7c7c7"/></svg>
<svg class="a" style="left:1952px;top:219px;" width="32" height="32" viewBox="0 0 32 32"><circle cx="16" cy="15.5" r="13.2" fill="none" stroke="#c7c7c7" stroke-width="2.8"/><path d="M25.5 6 L6.5 25" stroke="#c7c7c7" stroke-width="2.8"/></svg>
<div class="a" style="left:2004.5px;top:218px;width:2px;height:32px;background:#5e5e5e;"></div>
<span class="t" style="left:2030.50px;top:211.2px;height:48.0px;line-height:48.0px;font-size:24px;color:#c7c7c7;transform:scaleX(1.0641);">top</span>
<svg class="a" style="left:2077px;top:230px;" width="15" height="10" viewBox="0 0 15 10"><path d="M0 0 H15 L7.5 10 Z" fill="#c7c7c7"/></svg>
<div class="a" style="left:2114px;top:218px;width:2px;height:32px;background:#5e5e5e;"></div>
<svg class="a" style="left:2133px;top:221px;" width="38" height="26" viewBox="0 0 38 26"><path d="M2 13 Q10 1.6 19 1.6 Q28 1.6 36 13 Q28 24.4 19 24.4 Q10 24.4 2 13 Z" fill="none" stroke="#c7c7c7" stroke-width="2.8"/><circle cx="19" cy="13" r="5.4" fill="none" stroke="#c7c7c7" stroke-width="2.8"/></svg>
<div class="a" style="left:2188px;top:218px;width:2px;height:32px;background:#5e5e5e;"></div>
<div class="a" style="left:2204px;top:214px;width:326px;height:40px;background:#3c3c3c;border-radius:20px"></div>
<svg class="a" style="left:2225px;top:224.5px;" width="21" height="20" viewBox="0 0 21 20"><path d="M1.5 1.5 H19.5 L12 10.5 V18.5 H9 V10.5 Z" fill="none" stroke="#c7c7c7" stroke-width="2.6" stroke-linejoin="miter"/></svg>
<span class="t" style="left:2260.50px;top:211.2px;height:48.0px;line-height:48.0px;font-size:24px;color:#c7c7c7;transform:scaleX(0.9751);">Filter</span>
<span class="t" style="left:2553.00px;top:211.2px;height:48.0px;line-height:48.0px;font-size:24px;color:#c7c7c7;transform:scaleX(0.9787);">Default levels</span>
<svg class="a" style="left:2705.5px;top:229.5px;" width="15" height="10" viewBox="0 0 15 10"><path d="M0 0 H15 L7.5 10 Z" fill="#c7c7c7"/></svg>
<span class="t" style="left:1886.50px;top:263.4px;height:48.0px;line-height:48.0px;font-size:24px;color:#c7c7c7;transform:scaleX(0.9419);">No Issues</span>
<div class="a" style="left:2002px;top:270px;width:2px;height:32px;background:#5e5e5e;"></div>
<svg class="a" style="left:0;top:0" width="2726" height="1468"><polygon points="2034.58,276.33 2034.92,272.86 2041.08,272.86 2041.42,276.33 2044.67,278.20 2047.84,276.76 2050.92,282.09 2048.09,284.13 2048.09,287.87 2050.92,289.91 2047.84,295.24 2044.67,293.80 2041.42,295.67 2041.08,299.14 2034.92,299.14 2034.58,295.67 2031.33,293.80 2028.16,295.24 2025.08,289.91 2027.91,287.87 2027.91,284.13 2025.08,282.09 2028.16,276.76 2031.33,278.20" fill="none" stroke="#c7c7c7" stroke-width="2.6" stroke-linejoin="round"/><circle cx="2038" cy="286" r="4.93" fill="#c7c7c7"/></svg>
<div class="a" style="left:1880px;top:312px;width:846px;height:2px;background:#5e5e5e;"></div>
<span class="t m" style="left:2571.79px;top:321.1px;height:44.0px;line-height:44.0px;font-size:22px;color:#a8c7fa;">main.js:6</span><div class="a" style="left:2571.79px;top:352px;width:118.71px;height:2px;background:#a8c7fa;"></div>
<svg class="a" style="left:1952px;top:359px;" width="9" height="15" viewBox="0 0 9 15"><path d="M0 0 L8.5 7.5 L0 15 Z" fill="#c7c7c7"/></svg>
<span class="t m i" style="left:1972.00px;top:347.6px;height:44.0px;line-height:44.0px;font-size:22px;color:#e3e3e3;">User </span>
<span class="t m i" style="left:2037.95px;top:347.6px;height:44.0px;line-height:44.0px;font-size:22px;color:#e3e3e3;">{</span>
<span class="t m i" style="left:2051.14px;top:347.6px;height:44.0px;line-height:44.0px;font-size:22px;color:#9e9e9e;">email</span>
<span class="t m i" style="left:2117.09px;top:347.6px;height:44.0px;line-height:44.0px;font-size:22px;color:#e3e3e3;">: </span>
<span class="t m i" style="left:2143.47px;top:347.6px;height:44.0px;line-height:44.0px;font-size:22px;color:#5cd5fb;">'me@example.com'</span>
<span class="t m i" style="left:2354.51px;top:347.6px;height:44.0px;line-height:44.0px;font-size:22px;color:#e3e3e3;">, </span>
<span class="t m i" style="left:2380.89px;top:347.6px;height:44.0px;line-height:44.0px;font-size:22px;color:#9e9e9e;">name</span>
<span class="t m i" style="left:2433.65px;top:347.6px;height:44.0px;line-height:44.0px;font-size:22px;color:#e3e3e3;">: </span>
<span class="t m i" style="left:2460.03px;top:347.6px;height:44.0px;line-height:44.0px;font-size:22px;color:#5cd5fb;">'Mylan'</span>
<span class="t m i" style="left:2552.36px;top:347.6px;height:44.0px;line-height:44.0px;font-size:22px;color:#e3e3e3;">}</span>
<div class="a" style="left:1936px;top:391px;width:762px;height:2px;background:#474747;"></div>
<span class="t m" style="left:1936.50px;top:391.6px;height:44.0px;line-height:44.0px;font-size:22px;color:#e3e3e3;">Hi my name is Mylan.</span>
<span class="t m" style="left:2571.79px;top:391.6px;height:44.0px;line-height:44.0px;font-size:22px;color:#a8c7fa;">main.js:7</span><div class="a" style="left:2571.79px;top:422.5px;width:118.71px;height:2px;background:#a8c7fa;"></div>
<div class="a" style="left:1936px;top:434px;width:762px;height:2px;background:#474747;"></div>
<span class="t m" style="left:1936.50px;top:435.1px;height:44.0px;line-height:44.0px;font-size:22px;color:#e3e3e3;">Playing Guitar!</span>
<span class="t m" style="left:2558.60px;top:435.1px;height:44.0px;line-height:44.0px;font-size:22px;color:#a8c7fa;">main.js:12</span><div class="a" style="left:2558.6px;top:466px;width:131.9px;height:2px;background:#a8c7fa;"></div>
<div class="a" style="left:1936px;top:476px;width:762px;height:2px;background:#474747;"></div>
<span class="t m" style="left:1936.50px;top:476.6px;height:44.0px;line-height:44.0px;font-size:22px;color:#e3e3e3;">Shredding Some Licks!</span>
<span class="t m" style="left:2558.60px;top:476.6px;height:44.0px;line-height:44.0px;font-size:22px;color:#a8c7fa;">main.js:13</span><div class="a" style="left:2558.6px;top:507.5px;width:131.9px;height:2px;background:#a8c7fa;"></div>
<div class="a" style="left:1936px;top:519px;width:762px;height:2px;background:#474747;"></div>
<span class="t m" style="left:1936.50px;top:520.1px;height:44.0px;line-height:44.0px;font-size:22px;color:#e3e3e3;">Plucking the Strings!</span>
<span class="t m" style="left:2558.60px;top:520.1px;height:44.0px;line-height:44.0px;font-size:22px;color:#a8c7fa;">main.js:14</span><div class="a" style="left:2558.6px;top:551px;width:131.9px;height:2px;background:#a8c7fa;"></div>
<div class="a" style="left:1936px;top:561.5px;width:762px;height:2px;background:#474747;"></div>
<span class="t m" style="left:1936.50px;top:563.1px;height:44.0px;line-height:44.0px;font-size:22px;color:#e3e3e3;">Enhanced Dark Mode Extension:</span>
<span class="t m" style="left:2426.70px;top:563.1px;height:44.0px;line-height:44.0px;font-size:22px;color:#a8c7fa;">contentScript.js:145</span><div class="a" style="left:2426.7px;top:594px;width:263.8px;height:2px;background:#a8c7fa;"></div>
<span class="t m" style="left:1936.50px;top:591.6px;height:44.0px;line-height:44.0px;font-size:22px;color:#e3e3e3;">Content script loaded</span>
<svg class="a" style="left:1905px;top:650px;" width="11" height="15" viewBox="0 0 11 15"><path d="M1.2 1 L9 7.2 L1.2 13.4" fill="none" stroke="#7cacf8" stroke-width="2.2"/></svg>
<div class="a" style="left:1880px;top:1215px;width:846px;height:2px;background:#5e5e5e;"></div>
<div class="a" style="left:1880px;top:1217px;width:846px;height:251px;background:#3c3c3c;"></div>
<div class="a" style="left:1880px;top:1269px;width:846px;height:2px;background:#5e5e5e;"></div>
<div class="a" style="left:1909px;top:1229.5px;width:6px;height:6px;background:#c7c7c7;border-radius:50%"></div>
<div class="a" style="left:1909px;top:1240px;width:6px;height:6px;background:#c7c7c7;border-radius:50%"></div>
<div class="a" style="left:1909px;top:1250.5px;width:6px;height:6px;background:#c7c7c7;border-radius:50%"></div>
<span class="t" style="left:1956.00px;top:1223.4px;height:48.0px;line-height:48.0px;font-size:24px;color:#c7c7c7;transform:scaleX(0.9880);-webkit-text-stroke:0.45px;">Console</span>
<span class="t" style="left:2084.50px;top:1223.4px;height:48.0px;line-height:48.0px;font-size:24px;color:#c7c7c7;transform:scaleX(0.9669);-webkit-text-stroke:0.45px;">AI assistance</span>
<span class="t" style="left:2284.50px;top:1223.4px;height:48.0px;line-height:48.0px;font-size:24px;color:#a8c7fa;transform:scaleX(1.0092);-webkit-text-stroke:0.45px;">What's new</span>
<svg class="a" style="left:2417.5px;top:1237px;" width="16" height="16" viewBox="0 0 16 16"><path d="M1 1 L15 15 M15 1 L1 15" stroke="#c7c7c7" stroke-width="2.2"/></svg>
<div class="a" style="left:2264px;top:1266.5px;width:186px;height:4.5px;background:#a8c7fa;border-radius:4px 4px 0 0"></div>
<svg class="a" style="left:2650px;top:1229.5px;" width="28" height="28" viewBox="0 0 28 28"><rect x="1.5" y="1.5" width="25" height="24.5" rx="2" fill="none" stroke="#c7c7c7" stroke-width="2.8"/><path d="M16.5 1.5 V26" stroke="#c7c7c7" stroke-width="2.8"/></svg>
<svg class="a" style="left:2707px;top:1232px;" width="22" height="22" viewBox="0 0 22 22"><path d="M1 1 L21 21 M21 1 L1 21" stroke="#c7c7c7" stroke-width="2.8"/></svg>
<svg class="a" style="left:1920px;top:1303.5px;" width="64" height="64" viewBox="0 0 64 64"><circle cx="32" cy="32" r="32" fill="#1a73e8"/><circle cx="32" cy="32" r="25.5" fill="none" stroke="#fff" stroke-width="2.6"/><circle cx="32" cy="32" r="11" fill="none" stroke="#fff" stroke-width="2.6"/><path d="M32 21 H55.5 M22.5 37.5 L10.8 17.4 M41.5 37.5 L30 57.4" stroke="#fff" stroke-width="2.6"/></svg>
<span class="t" style="left:2004.00px;top:1304.5px;height:64.0px;line-height:64.0px;font-size:32px;color:#e3e3e3;transform:scaleX(0.9951);">What's new in DevTools 142</span>
<div class="a" style="left:1920.5px;top:1399px;width:267.5px;height:48.5px;background:#a8c7fa;border-radius:24.25px"></div>
<span class="t" style="left:1946.00px;top:1400.7px;height:48.0px;line-height:48.0px;font-size:24px;color:#062e6f;transform:scaleX(0.9933);-webkit-text-stroke:0.5px #062e6f;">See all new features</span>
</body></html>
